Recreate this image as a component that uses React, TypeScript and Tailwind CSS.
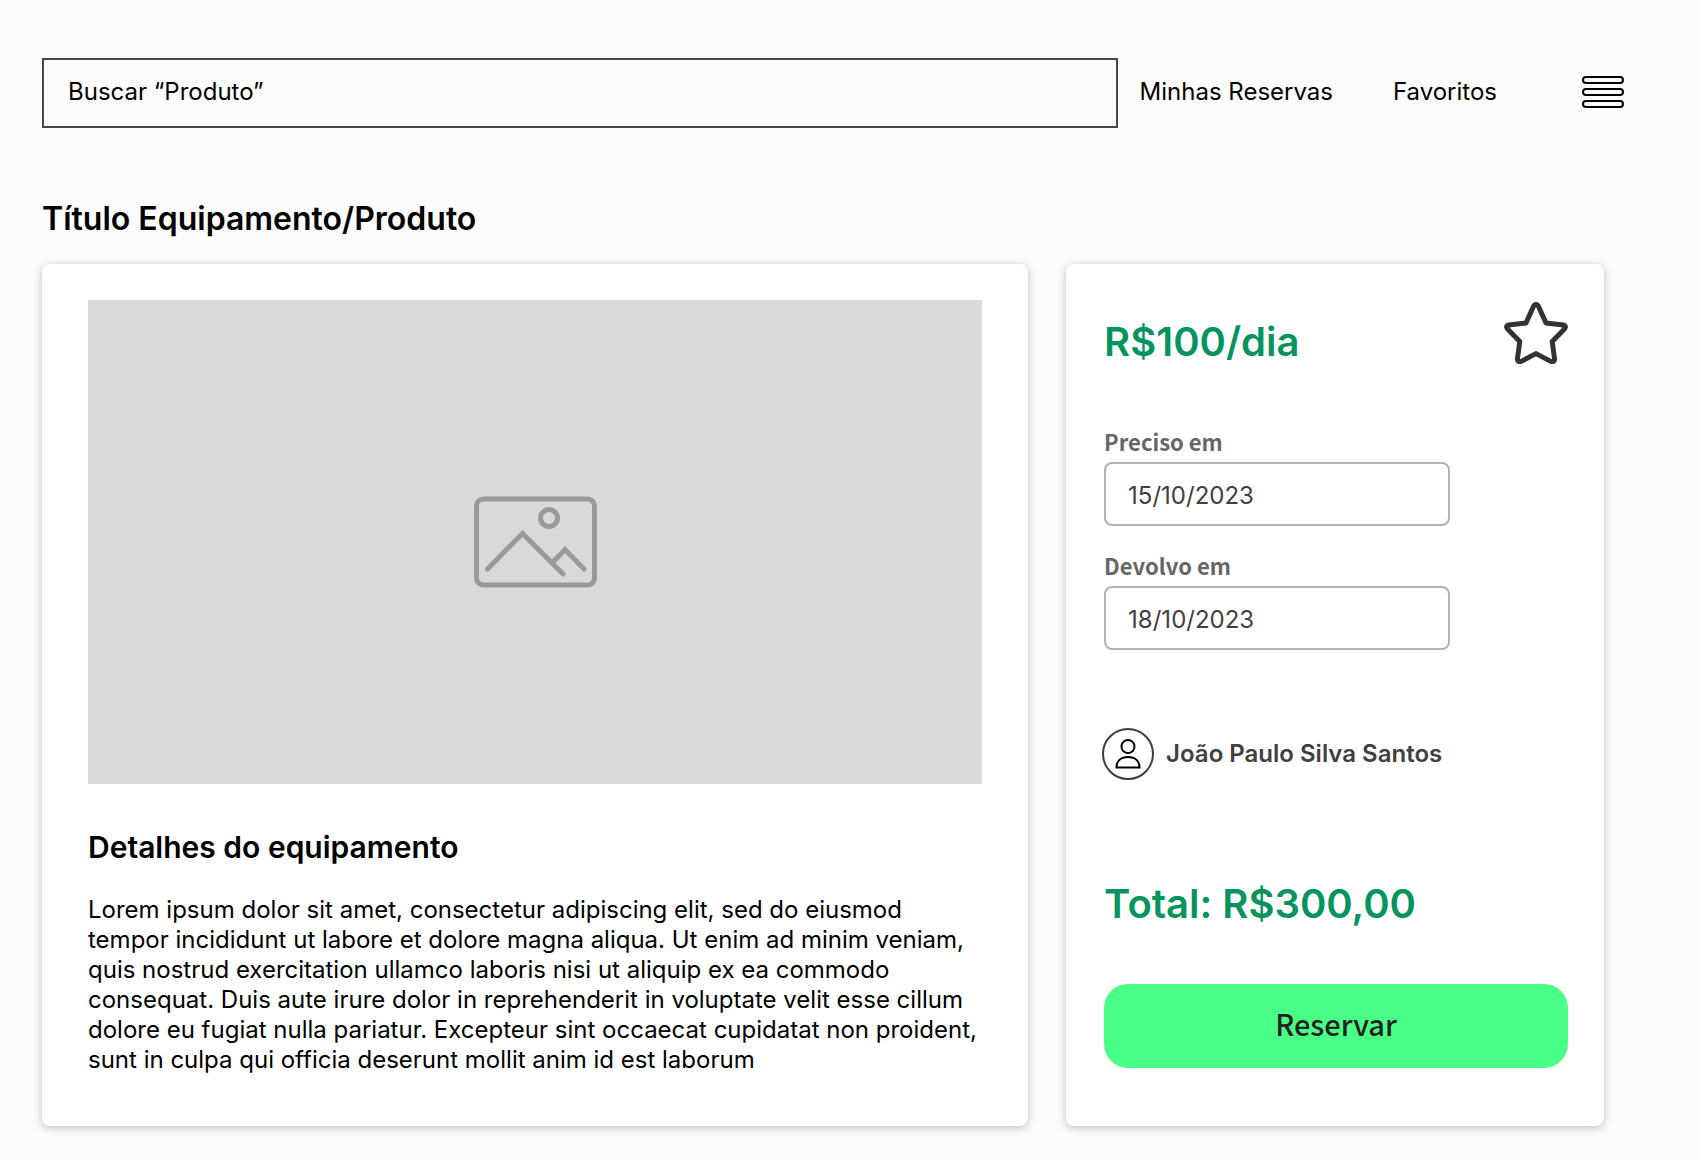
import { useState } from "react";

function MenuIcon() {
  return (
    <svg width="42" height="32" viewBox="0 0 42 32" fill="none" stroke="#000" strokeWidth="2" aria-hidden="true">
      <rect x="1" y="1" width="40" height="6" rx="3" />
      <rect x="1" y="13" width="40" height="6" rx="3" />
      <rect x="1" y="25" width="40" height="6" rx="3" />
    </svg>
  );
}

function StarIcon({ filled }: { filled: boolean }) {
  return (
    <svg width="64" height="64" viewBox="0 0 64 64" fill={filled ? "#333" : "none"} stroke="#333" strokeWidth="5" strokeLinejoin="round" aria-hidden="true">
      <path d="M29.8 5.8Q32 2.8 34.2 5.800L42 23L59.400 25Q63 26 60.400 29L48.200 41.600L50.600 59Q50.400 62.400 46.800 61.400L32 53.600L17.200 61.400Q13.600 62.400 13.400 59L15.800 41.600L3.600 29Q1 26 4.600 25L22 23Z" />
    </svg>
  );
}

function PictureIcon() {
  return (
    <svg width="124" height="92" viewBox="0 0 124 92" fill="none" stroke="#999" strokeWidth="5" strokeLinecap="round" aria-hidden="true">
      <rect x="3.5" y="3" width="118" height="86" rx="7" />
      <circle cx="76" cy="22" r="8.5" />
      <path d="M14.5 73L49.5 37.5L90 78M79.5 66.5L92 53.5L111 73" />
    </svg>
  );
}

function AvatarIcon() {
  return (
    <svg width="52" height="52" viewBox="0 0 52 52" fill="none" strokeWidth="2" aria-hidden="true">
      <circle cx="26" cy="26" r="25" stroke="#3d3d3d" />
      <circle cx="26" cy="18.5" r="6.5" stroke="#000" />
      <path d="M14.5 39.5C14.5 33 19 29 26 29S37.5 33 37.5 39.5Z" stroke="#000" />
    </svg>
  );
}

function DateField({ id, label, initial }: { id: string; label: string; initial: string }) {
  const [value, setValue] = useState(initial);
  return (
    <div className="flex flex-col">
      <label htmlFor={id} className="font-['Noto_Sans_CJK_JP',sans-serif] text-[22px] leading-[30px] font-bold text-[#666]">
        {label}
      </label>
      <input
        id={id}
        value={value}
        onChange={(e) => setValue(e.target.value)}
        className="mt-1.5 h-16 w-full max-w-[346px] rounded-lg border-2 border-[#b3b3b3] bg-white px-[22px] pt-0.5 text-2xl text-[#404040]"
      />
    </div>
  );
}

export default function App() {
  const [favorite, setFavorite] = useState(false);
  return (
    <div className="min-h-screen bg-[#fcfcfc] pt-[58px] pb-[34px] pl-[42px] font-['Inter',sans-serif] text-black">
      <header className="flex items-center pr-[76px]">
        <input
          type="search"
          aria-label="Buscar produto"
          placeholder="Buscar “Produto”"
          className="h-[70px] min-w-0 flex-1 border-2 border-[#4a4444] bg-transparent px-6 pb-1 text-2xl placeholder:text-black placeholder:opacity-100"
        />
        <nav className="ml-[22px] flex items-center gap-[60px] pb-0.5 text-2xl">
          <a href="#reservas">Minhas Reservas</a>
          <a href="#favoritos">Favoritos</a>
        </nav>
        <button type="button" aria-label="Menu" className="ml-[85px] pb-0.5">
          <MenuIcon />
        </button>
      </header>

      <main className="pr-24">
        <h1 className="mt-[71px] text-[32px] leading-10 font-semibold">Título Equipamento/Produto</h1>

        <div className="mt-[25px] grid grid-cols-[11fr_6fr] gap-[38px]">
          <section className="rounded-lg bg-white px-[46px] pt-9 pb-[51px] shadow-[0_2px_8px_rgba(0,0,0,0.25)]">
            <div className="flex h-[484px] items-center justify-center bg-[#d9d9d9]">
              <PictureIcon />
            </div>
            <h2 className="mt-[43px] text-[30px] leading-10 font-semibold">Detalhes do equipamento</h2>
            <p className="mt-7 text-2xl leading-[30px]">
              Lorem ipsum dolor sit amet, consectetur adipiscing elit, sed do eiusmod tempor incididunt ut labore et
              dolore magna aliqua. Ut enim ad minim veniam, quis nostrud exercitation ullamco laboris nisi ut aliquip ex
              ea commodo consequat. Duis aute irure dolor in reprehenderit in voluptate velit esse cillum dolore eu
              fugiat nulla pariatur. Excepteur sint occaecat cupidatat non proident, sunt in culpa qui officia deserunt
              mollit anim id est laborum
            </p>
          </section>

          <aside className="flex flex-col rounded-lg bg-white px-9 pt-9 pb-[58px] pl-[38px] shadow-[0_2px_8px_rgba(0,0,0,0.25)]">
            <div className="flex items-start justify-between">
              <p className="mt-4 text-[40px] leading-[52px] font-semibold text-[#05945f]">R$100/dia</p>
              <button
                type="button"
                aria-label="Favoritar"
                aria-pressed={favorite}
                onClick={() => setFavorite(!favorite)}
              >
                <StarIcon filled={favorite} />
              </button>
            </div>

            <div className="mt-[58px] flex flex-col gap-6">
              <DateField id="inicio" label="Preciso em" initial="15/10/2023" />
              <DateField id="fim" label="Devolvo em" initial="18/10/2023" />
            </div>

            <div className="mt-[78px] -ml-0.5 flex items-center gap-3">
              <AvatarIcon />
              <span className="text-2xl font-semibold text-[#404040]">João Paulo Silva Santos</span>
            </div>

            <p className="mt-auto text-[40px] leading-[52px] font-semibold text-[#05945f]">Total: R$300,00</p>
            <button
              type="button"
              className="mt-[54px] h-[84px] rounded-3xl bg-[#4aff86] pb-1 font-['Noto_Sans_CJK_JP',sans-serif] text-[29px] font-medium text-[#222]"
            >
              Reservar
            </button>
          </aside>
        </div>
      </main>
    </div>
  );
}
